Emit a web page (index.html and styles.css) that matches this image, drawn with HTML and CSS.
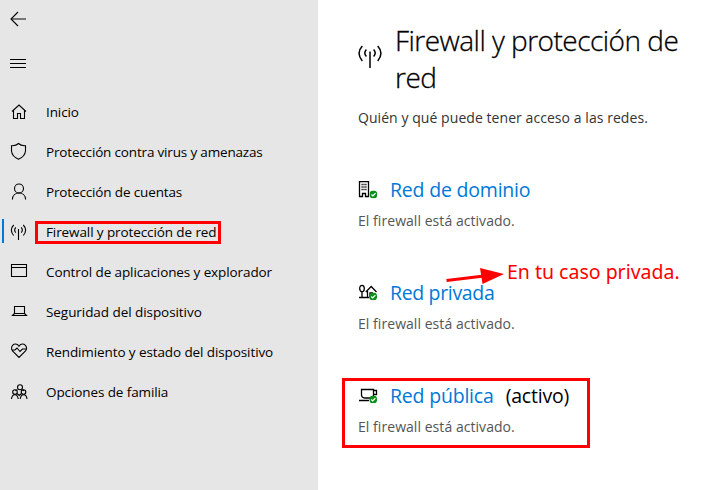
FILE: index.html
```html
<!DOCTYPE html>
<html lang="es">
<head>
<meta charset="utf-8">
<title>Firewall y protección de red</title>
<link rel="stylesheet" href="styles.css">
</head>
<body>
<svg class="defs" width="0" height="0" aria-hidden="true">
  <symbol id="antenna" viewBox="0 0 24 24"><path d="M12 6.5V23M8.4 4.4Q5.2 8 8.4 11.6M15.6 4.4Q18.8 8 15.6 11.6M4.3 1Q-2.2 8 4.3 16M19.7 1Q26.2 8 19.7 16"/></symbol>
  <symbol id="check" viewBox="0 0 8 8"><circle cx="4" cy="4" r="4" fill="#0c8f18" stroke="none"/><path d="M2 4.1 3.5 5.5 6.2 2.7" stroke="#fff"/></symbol>
</svg>
<div class="app">
  <aside class="sidebar">
    <svg class="icon back" viewBox="0 0 18 18"><path d="M1.5 9H16" stroke="#777" stroke-width="2"/><path d="M8 2 1 9l7 7"/></svg>
    <svg class="icon menu" viewBox="0 0 18 18"><path d="M1 5.5h16M1 9.5h16M1 13.5h16"/></svg>
    <nav>
      <a class="item"><svg class="icon" viewBox="0 0 18 18"><path d="M2 8.5 9 2l7 6.5M3.5 7.5v8h4v-5h3v5h4v-8"/></svg><span class="t1">Inicio</span></a>
      <a class="item"><svg class="icon" viewBox="0 0 18 18"><path d="M8.500 .5Q6 3 1.500 2.700V8Q2 13.500 8.500 16.200 15 13.500 15.500 8V2.700Q11 3 8.500 .5Z"/></svg><span class="t2">Protección contra virus y amenazas</span></a>
      <a class="item"><svg class="icon" viewBox="0 0 18 18"><circle cx="9" cy="5.500" r="4.500"/><path d="M2.400 16.500C2.700 7.900 15.300 7.900 15.600 16.500"/></svg><span class="t3">Protección de cuentas</span></a>
      <a class="item active"><svg class="icon" viewBox="0 0 18 18"><path d="M8.500 6v11M5.800 4.300Q3.500 7 5.800 9.700M11.200 4.300Q13.500 7 11.200 9.700M3.700 2Q-1 7 3.700 12.500M13.300 2Q18 7 13.300 12.500"/></svg><span class="t4">Firewall y protección de red</span></a>
      <a class="item"><svg class="icon" viewBox="0 0 18 18"><path d="M1.500 1.500h15v12h-15zM2 4.500h14"/></svg><span class="t5">Control de aplicaciones y explorador</span></a>
      <a class="item"><svg class="icon" viewBox="0 0 18 18"><path d="M4.500 3.500h10v7h-10zM4.500 10.500l-2 2h14l-2-2"/></svg><span class="t6">Seguridad del dispositivo</span></a>
      <a class="item"><svg class="icon" viewBox="0 0 18 18"><path d="M9 3.200C7 0 3.800 1 2.600 2.300 1 4.200 1.300 6 2.500 8L9 14.500 15.500 8C17 6 17 4.200 15.400 2.300 14 1 11 0 9 3.200ZM2 7h3l2-2 3 3.500L12.500 6H16"/></svg><span class="t7">Rendimiento y estado del dispositivo</span></a>
      <a class="item"><svg class="icon" viewBox="0 0 18 18"><circle cx="10" cy="4.200" r="2.500"/><circle cx="5" cy="9" r="2.300"/><circle cx="13.500" cy="9" r="2.300"/><path d="M1.500 16C2 10.500 7.500 10 8.200 16M10.200 16C11 10 16.500 10.500 17 16M7.500 6.700Q6 7 5.500 8M12 6.700q1.500.3 2 1.300M7 10.500l2.300 2 2.200-2"/></svg><span class="t8">Opciones de familia</span></a>
    </nav>
  </aside>
  <main>
    <header>
      <svg class="title-icon"><use href="#antenna"/></svg>
      <h1><span class="h-a">Firewall y protección de</span><br><span class="h-b">red</span></h1>
    </header>
    <p class="intro">Quién y qué puede tener acceso a las redes.</p>
    <section>
      <h2><svg class="net-icon" viewBox="0 0 20 18"><path d="M1.500 15.500V.7h9v14.800h-3v-3h-3v3h-3z"/><path d="M3.500 3.500h5M3.500 6h5M3.500 8.500h5" stroke-dasharray="1.200 .7"/><use href="#check" x="11.500" y="9.500" width="7.800" height="7.800"/></svg><a class="n1">Red de dominio</a></h2>
      <p class="status">El firewall está activado.</p>
    </section>
    <section>
      <h2><svg class="net-icon" viewBox="0 0 20 18"><ellipse cx="4" cy="4.500" rx="2.300" ry="3.200"/><path d="M4 7.700v5.800M1 13.500h10.500M7.800 8l5.400-5.500 5.300 5.500M9.500 7v6M12 13V9h3"/><use href="#check" x="11.300" y="8.500" width="7.800" height="7.800"/></svg><a class="n2">Red privada</a></h2>
      <p class="status">El firewall está activado.</p>
      <svg class="arrow" viewBox="0 0 60 20"><path d="M.5 11.500 38 7" stroke="red" stroke-width="3"/><path d="M34 -1 58 5 36.500 15z" fill="red" stroke="none"/></svg>
      <span class="note">En tu caso privada.</span>
    </section>
    <section class="public">
      <h2><svg class="net-icon" viewBox="0 0 20 18"><path d="M3.500 2.500h12v5.500q0 3-4 3h-4q-4 0-4-3zM15.500 3.500h3v4h-3M1 13.500h10"/><use href="#check" x="11.300" y="8.500" width="7.800" height="7.800"/></svg><a class="n3">Red pública</a><span class="live">(activo)</span></h2>
      <p class="status">El firewall está activado.</p>
    </section>
  </main>
</div>
</body>
</html>
```
FILE: styles.css
```css
*, *::before, *::after { box-sizing: border-box; }
body { margin: 0; background: #fff; color: #000; font: 14px/20px "Open Sans", "Noto Sans", sans-serif; }
svg { fill: none; stroke: #000; stroke-width: 1.1; flex: none; overflow: visible; }
.defs { position: absolute; }
.app { display: flex; width: 725px; height: 490px; overflow: hidden; }
.sidebar { width: 318px; flex: none; background: #e6e6e6; padding-top: 10px; }
.icon { display: block; width: 18px; height: 18px; }
.back { margin-left: 10px; }
.menu { margin: 26px 0 0 9px; }
nav { margin-top: 20px; font-size: 13.5px; letter-spacing: -0.1px; }
.item { display: flex; align-items: center; height: 40px; padding-left: 10px; white-space: nowrap; position: relative; }
.item .icon { margin-right: 18px; }
.t2 { letter-spacing: -0.17px; }
.t3 { letter-spacing: -0.14px; }
.t6 { letter-spacing: -0.06px; }
.active::before { content: ""; position: absolute; left: 2px; top: 7px; width: 2px; height: 24px; background: #0078d7; }
.active::after { content: ""; position: absolute; left: 35px; top: 9px; width: 186px; height: 23px; border: 3px solid red; }
main { flex: 1; padding: 22px 0 0 40px; }
header { display: flex; }
.title-icon { width: 24px; height: 24px; margin: 23px 13px 0 0; stroke-width: 1.5; }
h1 { margin: 0; font-weight: 300; font-size: 28px; line-height: 37px; white-space: nowrap; letter-spacing: -0.52px; -webkit-text-stroke: 0.3px #000; }
.intro { margin: 12px 0 0; color: #333; white-space: nowrap; letter-spacing: 0.06px; }
section { position: relative; height: 103px; }
.intro + section { margin-top: 48px; }
h2 { display: flex; align-items: center; margin: 0; height: 28px; font-weight: 400; font-size: 19.5px; line-height: 28px; white-space: nowrap; letter-spacing: -0.2px; }
h2 a { color: #0078d7; }
.n2 { letter-spacing: -0.34px; }
.net-icon { width: 20px; height: 18px; margin-right: 12px; stroke-width: 1.3; }
.live { margin-left: 12px; }
.status { margin: 7px 0 0; color: #555; white-space: nowrap; letter-spacing: 0.05px; }
.arrow { position: absolute; left: 88px; top: -10px; width: 60px; height: 20px; }
.note { position: absolute; left: 149px; top: -21px; font: 19.5px/28px "Noto Sans", sans-serif; color: red; white-space: nowrap; }
.public::after { content: ""; position: absolute; left: -16px; top: -4px; width: 248px; height: 70px; border: 3px solid red; }
```
